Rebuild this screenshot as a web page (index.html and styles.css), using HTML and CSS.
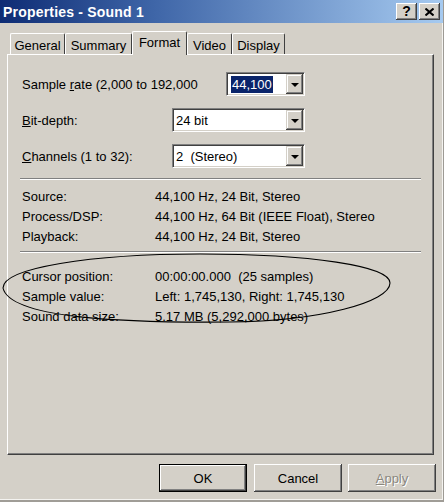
FILE: index.html
```html
<!DOCTYPE html>
<html>
<head>
<meta charset="utf-8">
<link rel="stylesheet" href="styles.css">
</head>
<body>
<div class="window">
  <div class="titlebar">
    <span class="title">Properties - Sound 1</span>
    <div class="capbtns">
      <div class="capbtn help">?</div>
      <div class="capbtn close"><svg width="9" height="8" viewBox="0 0 9 8"><path d="M0.5 0.5 L8.5 7.5 M8.5 0.5 L0.5 7.5" stroke="#000" stroke-width="2" fill="none"/></svg></div>
    </div>
  </div>

  <div class="tabs">
    <div class="tab t-general">General</div>
    <div class="tab t-summary">Summary</div>
    <div class="tab t-format active">Format</div>
    <div class="tab t-video">Video</div>
    <div class="tab t-display">Display</div>
  </div>

  <div class="panel">
    <div class="form">
      <div class="row">
        <span class="label">Sample <u>r</u>ate (2,000 to 192,000</span>
        <div class="combo small"><span class="sel">44,100</span><span class="drop"><i class="tri"></i></span></div>
      </div>
      <div class="row">
        <span class="label"><u>B</u>it-depth:</span>
        <div class="combo"><span class="val">24 bit</span><span class="drop"><i class="tri"></i></span></div>
      </div>
      <div class="row">
        <span class="label"><u>C</u>hannels (1 to 32):</span>
        <div class="combo"><span class="val">2&nbsp;&nbsp;(Stereo)</span><span class="drop"><i class="tri"></i></span></div>
      </div>
    </div>

    <div class="sep s1"></div>

    <div class="info i1">
      <span>Source:</span><span>44,100 Hz, 24 Bit, Stereo</span>
      <span>Process/DSP:</span><span>44,100 Hz, 64 Bit (IEEE Float), Stereo</span>
      <span>Playback:</span><span>44,100 Hz, 24 Bit, Stereo</span>
    </div>

    <div class="sep s2"></div>

    <div class="info i2">
      <span>Cursor position:</span><span>00:00:00.000&nbsp;&nbsp;(25 samples)</span>
      <span>Sample value:</span><span>Left: 1,745,130, Right: 1,745,130</span>
      <span>Sound data size:</span><span>5.17 MB (5,292,000 bytes)</span>
    </div>
  </div>

  <div class="buttons">
    <div class="btn default">OK</div>
    <div class="btn">Cancel</div>
    <div class="btn disabled"><u>A</u>pply</div>
  </div>

  <svg class="circle" width="400" height="80" viewBox="0 250 400 80">
    <path d="M3 288 C3 268 90 254 200 254 C310 254 390 266 390 283 C390 302 320 321 230 322 C120 323 10 318 3 288 Z" fill="none" stroke="#000" stroke-width="1.1"/>
  </svg>
</div>
</body>
</html>
```

FILE: styles.css
```css
html, body {
  margin: 0;
  padding: 0;
  background: #d4d0c8;
}

body {
  font-family: "Liberation Sans", Arial, sans-serif;
  font-size: 13px;
  color: #000;
}

.window {
  position: relative;
  width: 444px;
  height: 502px;
  box-sizing: border-box;
  background: #d4d0c8;
  border-right: 1px solid #9d9a94;
  border-bottom: 2px solid #a09d97;
  box-shadow: inset -1px -1px #f4f3f0;
  display: flex;
  flex-direction: column;
  overflow: hidden;
}

/* title bar */
.titlebar {
  height: 23px;
  flex: none;
  display: flex;
  align-items: center;
  justify-content: space-between;
  padding-left: 3px;
  background: linear-gradient(to right, #0e2c74 0%, #3f66a8 35%, #a6caf0 100%);
}

.title {
  color: #fff;
  font-weight: bold;
  font-size: 14px;
  letter-spacing: 0.2px;
}

.capbtns {
  display: flex;
  gap: 2px;
  padding-right: 3px;
}

.capbtn {
  width: 21px;
  height: 17px;
  box-sizing: border-box;
  background: #d4d0c8;
  box-shadow: inset -1px -1px #404040, inset 1px 1px #fff, inset -2px -2px #808080, inset 2px 2px #d4d0c8;
  display: flex;
  align-items: center;
  justify-content: center;
}

.capbtn.help {
  font-weight: bold;
  font-size: 14px;
  line-height: 17px;
  padding-bottom: 1px;
}

/* tabs */
.tabs {
  flex: none;
  height: 23px;
  margin-top: 8px;
  padding-left: 10px;
  display: flex;
  align-items: flex-end;
  position: relative;
  z-index: 1;
}

.tab {
  height: 21px;
  box-sizing: border-box;
  padding-top: 4px;
  line-height: 16px;
  text-align: center;
  background: #d4d0c8;
  border-top: 1px solid #fff;
  border-left: 1px solid #fff;
  border-right: 1px solid #404040;
  border-radius: 2px 2px 0 0;
}

.t-general { width: 55px; }
.t-summary { width: 67px; }
.t-format { width: 55px; }
.t-video { width: 45px; }
.t-display { width: 53px; }

.tab.active {
  height: 24px;
  margin-bottom: -1px;
  padding-top: 3px;
}

/* panel */
.panel {
  flex: none;
  position: relative;
  margin-left: 7px;
  width: 427px;
  height: 401px;
  box-sizing: border-box;
  border-top: 1px solid #fff;
  border-left: 1px solid #fff;
  border-right: 1px solid #404040;
  border-bottom: 1px solid #404040;
  box-shadow: inset -1px -1px #808080;
  padding: 17px 12px 0 12px;
}

.form {
  width: 283px;
  margin-left: 2px;
  display: flex;
  flex-direction: column;
  gap: 12px;
}

.row {
  height: 24px;
  display: flex;
  align-items: center;
  justify-content: space-between;
}

.combo {
  width: 133px;
  height: 24px;
  box-sizing: border-box;
  background: #fff;
  border: 1px solid;
  border-color: #808080 #fff #fff #808080;
  box-shadow: inset 1px 1px #404040, inset -1px -1px #d4d0c8;
  padding: 1px;
  display: flex;
  align-items: center;
}

.combo.small {
  width: 79px;
}

.val {
  flex: 1;
  padding-left: 2px;
}

.sel {
  margin-left: 3px;
  background: #0a246a;
  color: #fff;
  line-height: 17px;
  padding: 0 1px;
}

.drop {
  margin-left: auto;
  width: 17px;
  height: 20px;
  box-sizing: border-box;
  background: #d4d0c8;
  box-shadow: inset -1px -1px #404040, inset 1px 1px #d4d0c8, inset -2px -2px #808080, inset 2px 2px #fff;
  display: flex;
  align-items: center;
  justify-content: center;
}

.tri {
  width: 0;
  height: 0;
  border-left: 4px solid transparent;
  border-right: 4px solid transparent;
  border-top: 4px solid #000;
  margin-top: 1px;
}

.sep {
  height: 0;
  border-top: 1px solid #808080;
  border-bottom: 1px solid #fff;
}

.s1 { margin-top: 10px; }
.s2 { margin-top: 4px; }

.info {
  margin-left: 2px;
  display: grid;
  grid-template-columns: 133px 1fr;
  line-height: 20px;
}

.i1 { margin-top: 7px; }
.i2 { margin-top: 14px; }

/* buttons */
.buttons {
  flex: none;
  margin-top: 9px;
  display: flex;
  justify-content: flex-end;
  gap: 6px;
  padding-right: 7px;
}

.btn {
  width: 88px;
  height: 28px;
  box-sizing: border-box;
  background: #d4d0c8;
  box-shadow: inset -1px -1px #404040, inset 1px 1px #fff, inset -2px -2px #808080, inset 2px 2px #d4d0c8;
  display: flex;
  align-items: center;
  justify-content: center;
}

.btn.default {
  margin-right: 1px;
  border: 1px solid #000;
  box-shadow: inset -1px -1px #404040, inset 1px 1px #fff, inset -2px -2px #808080;
}

.btn.disabled {
  color: #8a877f;
  text-shadow: 1px 1px #fff;
}

/* hand-drawn ellipse annotation */
.circle {
  position: absolute;
  left: 0;
  top: 250px;
}
```
